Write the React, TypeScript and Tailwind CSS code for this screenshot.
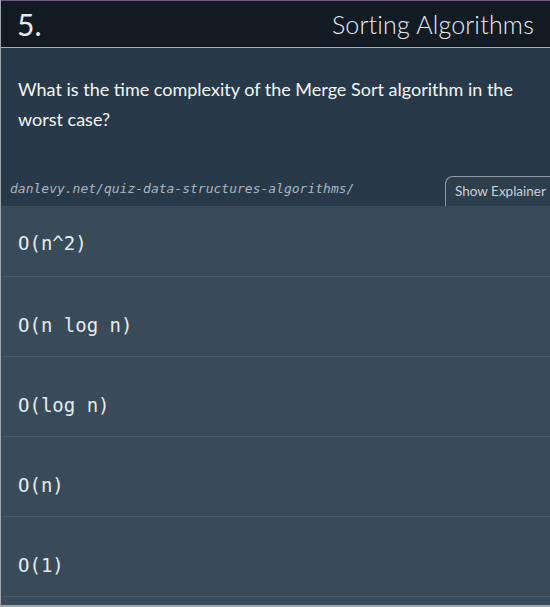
import React from 'react';

const options = ['O(n^2)', 'O(n log n)', 'O(log n)', 'O(n)', 'O(1)'];

export default function App() {
  return (
    <div className="w-[550px] h-[607px] bg-[#9ea6ac] overflow-hidden">
      <div className="w-[549px] h-[605px] ml-px border-t border-[#6e5b7b] bg-[#283a49] flex flex-col">
        <header
          className="h-[47px] shrink-0 bg-[#121a23] border-b border-[#a6b0ba] flex items-center justify-between pl-[16px] pr-[16px] text-[#e8ecef]"
          style={{ fontFamily: 'Lato, "Noto Sans", sans-serif' }}
        >
          <span className="text-[30px] leading-none">5.</span>
          <span className="text-[25px] font-light leading-none tracking-[0.2px]">Sorting Algorithms</span>
        </header>

        <p
          className="px-[17px] pt-[26px] text-[18px] leading-[30px] text-[#f4f6f8]"
          style={{ fontFamily: 'Lato, "Noto Sans", sans-serif' }}
        >
          What is the time complexity of the Merge Sort algorithm in the worst case?
        </p>

        <div className="mt-[42px] flex items-end justify-between pl-[9px]">
          <span
            className="italic text-[13px] text-[#a9b5c0] pb-[8px]"
            style={{ fontFamily: '"DejaVu Sans Mono", monospace' }}
          >
            danlevy.net/quiz-data-structures-algorithms/
          </span>
          <button
            className="h-[30px] w-[105px] border-t border-l border-[#8e9aa6] rounded-tl-[8px] bg-[#2d3e4d] text-[13.5px] text-[#c8d0d7] text-left pl-[9px]"
            style={{ fontFamily: 'Lato, "Noto Sans", sans-serif' }}
          >
            Show Explainer
          </button>
        </div>

        <div className="flex-1 bg-[#394a59]" style={{ fontFamily: '"DejaVu Sans Mono", monospace' }}>
          {options.map((opt, i) => (
            <div
              key={opt}
              className={
                i === 0
                  ? 'h-[70px] flex items-center pl-[17px] pt-[4px] text-[19px] text-[#e6eaee]'
                  : 'h-[80px] border-t border-[#4a5a69] flex items-center pl-[17px] pt-[18px] text-[19px] text-[#e6eaee]'
              }
            >
              {opt}
            </div>
          ))}
          <div className="border-t border-[#4a5a69]" />
        </div>
      </div>
    </div>
  );
}
